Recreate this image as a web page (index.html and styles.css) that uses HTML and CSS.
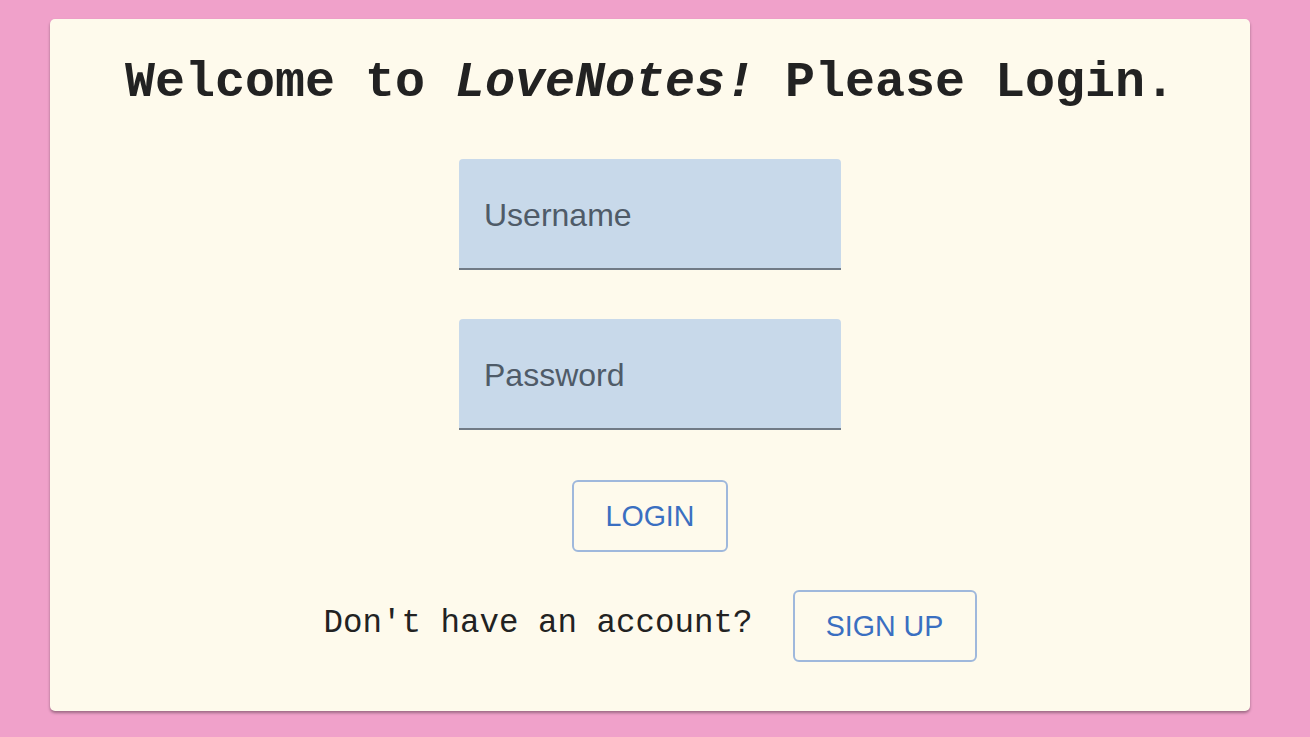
FILE: index.html
```html
<!DOCTYPE html>
<html>
<head>
<meta charset="utf-8">
<link rel="stylesheet" href="styles.css">
</head>
<body>
<div class="card">
  <h1 class="title">Welcome to <em>LoveNotes!</em> Please Login.</h1>
  <form class="form">
    <div class="field"><input class="input" type="text" placeholder="Username"></div>
    <div class="field"><input class="input" type="password" placeholder="Password"></div>
    <button type="button" class="btn btn-login">LOGIN</button>
    <div class="signup-row">
      <span class="signup-text">Don't have an account?</span>
      <button type="button" class="btn btn-signup">SIGN UP</button>
    </div>
  </form>
</div>
</body>
</html>
```

FILE: styles.css
```css
html, body {
  margin: 0;
  padding: 0;
}
body {
  background: #f0a1ca;
  width: 1310px;
  height: 737px;
  overflow: hidden;
  padding-top: 19px;
  box-sizing: border-box;
}
.card {
  margin: 0 0 0 50px;
  width: 1200px;
  height: 692px;
  box-sizing: border-box;
  background: #fefaec;
  border-radius: 5px;
  box-shadow: 0 2px 3px rgba(0,0,0,0.35);
  padding-top: 34px;
  display: flex;
  flex-direction: column;
  align-items: center;
}
.title {
  margin: 0;
  font-family: "Liberation Mono", "Courier New", monospace;
  font-weight: bold;
  font-size: 50px;
  line-height: 60px;
  color: #222;
  text-align: center;
  white-space: nowrap;
}
.title em {
  font-style: italic;
}
.form {
  margin-top: 46px;
  display: flex;
  flex-direction: column;
  align-items: center;
}
.field {
  width: 382px;
  height: 111px;
  margin-bottom: 49px;
}
.field:nth-child(2) {
  margin-bottom: 50px;
}
.input {
  width: 100%;
  height: 100%;
  box-sizing: border-box;
  border: none;
  border-bottom: 2px solid #717b86;
  border-radius: 4px 4px 0 0;
  background: #c8d9ea;
  padding: 4px 0 0 25px;
  font-family: "Liberation Sans", Arial, sans-serif;
  font-size: 32px;
  color: #4b5866;
  outline: none;
}
.input::placeholder {
  color: #4f5b68;
  opacity: 1;
}
.btn {
  font-family: "Liberation Sans", Arial, sans-serif;
  font-size: 28.6px;
  color: #3a6fc1;
  background: transparent;
  border: 2px solid #9fb8dc;
  border-radius: 6px;
  height: 72px;
  box-sizing: border-box;
  padding: 0;
  letter-spacing: 0;
}
.btn-login {
  width: 156px;
  height: 72px;
}
.signup-row {
  margin-top: 38px;
  display: flex;
  align-items: center;
  gap: 40px;
}
.signup-text {
  font-family: "Liberation Mono", "Courier New", monospace;
  font-size: 32.5px;
  color: #222;
  position: relative;
  top: -3px;
}
.btn-signup {
  width: 184px;
}
```
